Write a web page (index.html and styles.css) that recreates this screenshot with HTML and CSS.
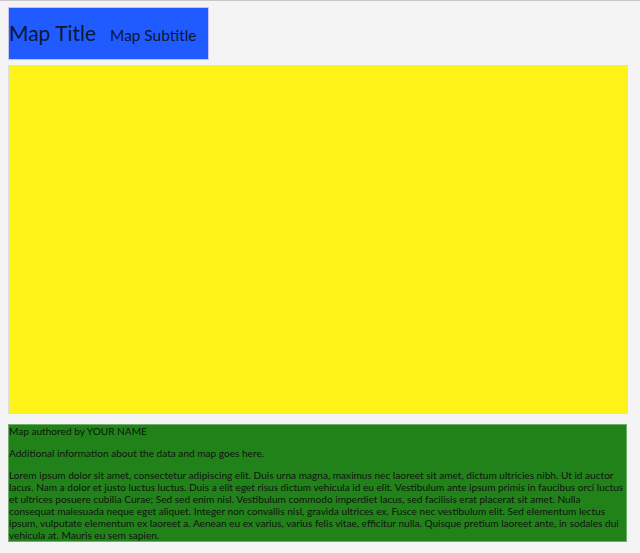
FILE: index.html
```html
<!DOCTYPE html>
<html lang="en">
<head>
<meta charset="utf-8">
<title>Map</title>
<link rel="stylesheet" href="styles.css">
</head>
<body>
<header class="header">
  <h1 class="title">Map Title</h1>
  <h2 class="subtitle">Map Subtitle</h2>
</header>
<div class="map"></div>
<footer class="footer">
  <p>Map authored by YOUR NAME</p>
  <p>Additional information about the data and map goes here.</p>
  <p>Lorem ipsum dolor sit amet, consectetur adipiscing elit. Duis urna magna, maximus nec laoreet sit amet, dictum ultricies nibh. Ut id auctor lacus. Nam a dolor et justo luctus luctus. Duis a elit eget risus dictum vehicula id eu elit. Vestibulum ante ipsum primis in faucibus orci luctus et ultrices posuere cubilia Curae; Sed sed enim nisl. Vestibulum commodo imperdiet lacus, sed facilisis erat placerat sit amet. Nulla consequat malesuada neque eget aliquet. Integer non convallis nisl, gravida ultrices ex. Fusce nec vestibulum elit. Sed elementum lectus ipsum, vulputate elementum ex laoreet a. Aenean eu ex varius, varius felis vitae, efficitur nulla. Quisque pretium laoreet ante, in sodales dui vehicula at. Mauris eu sem sapien.</p>
</footer>
</body>
</html>
```

FILE: styles.css
```css
html {
  background: #f4f4f4;
  border-top: 1px solid #c8c8c8;
}
body {
  margin: 6px 8px 8px 8px;
  font-family: Lato, "Open Sans", sans-serif;
  color: #111;
}
.header {
  display: inline-flex;
  align-items: baseline;
  gap: 14px;
  height: 53px;
  box-sizing: border-box;
  background: #1f5bff;
  border: 1px solid #c9c2f7;
  color: #0b1733;
  padding: 0 12px 4px 0;
  vertical-align: top;
  white-space: nowrap;
}
.title {
  margin: 0;
  font-size: 21px;
  font-weight: 400;
  line-height: 49px;
}
.subtitle {
  margin: 0;
  font-size: 15.4px;
  font-weight: 400;
  line-height: 49px;
}
.map {
  margin-top: 5px;
  width: 620px;
  height: 349px;
  box-sizing: border-box;
  background: #fff31a;
  border: 1px solid #dcdcdc;
}
.footer {
  margin-top: 10px;
  width: 619px;
  box-sizing: border-box;
  background: #22821a;
  border: 1px solid #6fae68;
  font-size: 10.1px;
  line-height: 12px;
  color: #0c150c;
}
.footer p {
  margin: 10px 0;
}
.footer p:first-child {
  margin-top: 0;
}
.footer p:last-child {
  margin-bottom: 0;
}
```
